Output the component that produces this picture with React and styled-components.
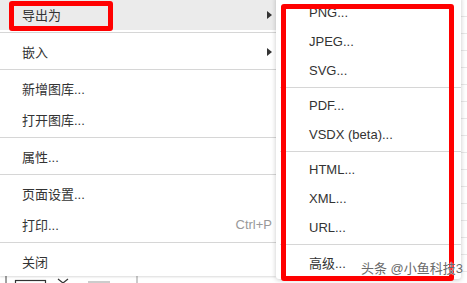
import React from "react";
import styled, { createGlobalStyle } from "styled-components";

const GlobalStyle = createGlobalStyle`
  html, body {
    margin: 0;
    padding: 0;
  }
  body {
    font-family: "Liberation Sans", Arial, "Noto Sans CJK SC", sans-serif;
  }
`;

const mainItems = [
  { label: "导出为", arrow: true, active: true },
  "sep",
  { label: "嵌入", arrow: true },
  "sep",
  { label: "新增图库..." },
  { label: "打开图库..." },
  "sep",
  { label: "属性..." },
  "sep",
  { label: "页面设置..." },
  { label: "打印...", shortcut: "Ctrl+P" },
  "sep",
  { label: "关闭" },
];

const subItems = [
  "PNG...",
  "JPEG...",
  "SVG...",
  "sep",
  "PDF...",
  "VSDX (beta)...",
  "sep",
  "HTML...",
  "XML...",
  "URL...",
  "sep",
  "高级...",
];

const App = () => {
  return (
    <>
      <GlobalStyle />
      <StPage>
        <StToolbarHint width="160" height="8" viewBox="0 0 160 8">
          <line x1="6" y1="0" x2="6" y2="8" stroke="#444" strokeWidth="1" />
          <rect x="15.5" y="5.5" width="30" height="6" fill="none" stroke="#333" strokeWidth="1.2" />
          <path d="M58 4 L63 8 L68 4" fill="none" stroke="#333" strokeWidth="1.2" />
          <line x1="88" y1="7" x2="110" y2="7" stroke="#999" strokeWidth="1" />
          <line x1="137" y1="0" x2="137" y2="8" stroke="#ccc" strokeWidth="2" />
        </StToolbarHint>

        <StMainMenu>
          {mainItems.map((item, i) =>
            item === "sep" ? (
              <StMainSep key={i} />
            ) : (
              <StMainItem key={i} $active={item.active}>
                <span>{item.label}</span>
                {item.arrow && <StArrow />}
                {item.shortcut && <StShortcut>{item.shortcut}</StShortcut>}
              </StMainItem>
            )
          )}
        </StMainMenu>

        <StSubMenu>
          {subItems.map((item, i) =>
            item === "sep" ? (
              <StSubSep key={i} />
            ) : (
              <StSubItem key={i}>{item}</StSubItem>
            )
          )}
        </StSubMenu>

        <StMark $left={9} $top={1} $width={104} $height={30} />
        <StMark $left={281} $top={4} $width={173} $height={277} />

        <StWatermark>头条 @小鱼科技3</StWatermark>
      </StPage>
    </>
  );
};

const StPage = styled.div`
  position: relative;
  width: 467px;
  height: 283px;
  overflow: hidden;
  display: flex;
  align-items: flex-start;
  background-color: #fff;
  background-image: repeating-linear-gradient(
    to bottom,
    transparent 0,
    transparent 16px,
    #e8e8e8 16px,
    #e8e8e8 17px
  );
  font-size: 13px;
  color: #333;
`;

const StToolbarHint = styled.svg`
  position: absolute;
  left: 0;
  bottom: 0;
  z-index: 0;
`;

const StMainMenu = styled.ul`
  position: relative;
  z-index: 1;
  list-style: none;
  margin: -1px 0 0;
  padding: 0;
  width: 276px;
  height: 277px;
  background: #fff;
  box-shadow: 0 1px 2px rgba(0, 0, 0, 0.15);
`;

const StMainItem = styled.li`
  height: 31px;
  display: flex;
  align-items: center;
  justify-content: space-between;
  padding: 0 4px 0 22px;
  background: ${(p) => (p.$active ? "#ebebeb" : "transparent")};
  white-space: nowrap;
`;

const StMainSep = styled.li`
  height: 1px;
  margin: 2px 0 3px;
  background: #d6d6d6;
`;

const StArrow = styled.span`
  width: 0;
  height: 0;
  border-top: 4px solid transparent;
  border-bottom: 4px solid transparent;
  border-left: 5px solid #333;
`;

const StShortcut = styled.span`
  color: #999;
`;

const StSubMenu = styled.ul`
  position: relative;
  z-index: 2;
  list-style: none;
  margin: -4px 0 0;
  padding: 2px 0 2px;
  width: 185px;
  background: #fff;
  box-shadow: 0 1px 5px rgba(0, 0, 0, 0.22);
  border-radius: 0 0 3px 3px;
`;

const StSubItem = styled.li`
  height: 29px;
  display: flex;
  align-items: center;
  padding-left: 33px;
  white-space: nowrap;
`;

const StSubSep = styled.li`
  height: 1px;
  margin: 2px 0 3px 4px;
  background: #d6d6d6;
`;

const StMark = styled.div`
  position: absolute;
  z-index: 3;
  left: ${(p) => p.$left}px;
  top: ${(p) => p.$top}px;
  width: ${(p) => p.$width}px;
  height: ${(p) => p.$height}px;
  box-sizing: border-box;
  border: 5px solid #ff0000;
  border-radius: 3px;
  pointer-events: none;
`;

const StWatermark = styled.div`
  position: absolute;
  z-index: 4;
  right: 4px;
  bottom: 6px;
  font-size: 13px;
  color: #6a6a6a;
  white-space: nowrap;
  text-shadow: 0 0 1px #fff, 0 0 1px #fff;
`;

export default App;
